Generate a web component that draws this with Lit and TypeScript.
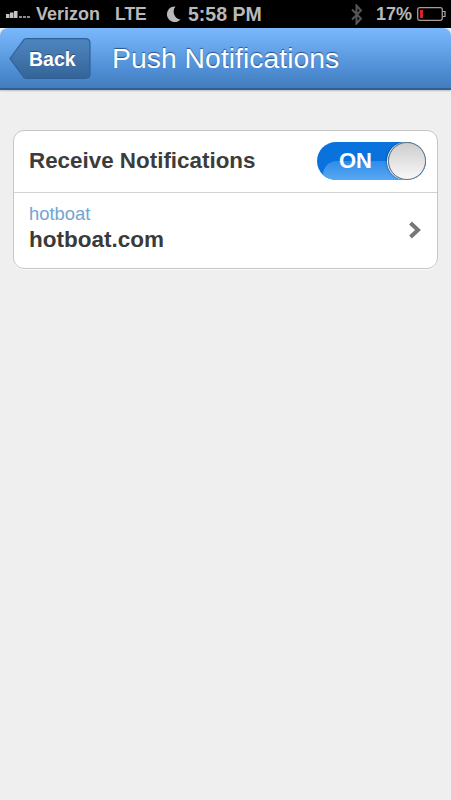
import { LitElement, html, css } from "lit";
import { customElement } from "lit/decorators.js";

@customElement("app-root")
export class AppRoot extends LitElement {
  static styles = css`
    :host { display: block; width: 451px; height: 800px; background: #efefef; font-family: "Liberation Sans", Arial, sans-serif; overflow: hidden; }
    .status { height: 28px; background: #000; display: flex; align-items: center; position: relative; color: #b9b9b9; font-weight: bold; font-size: 18px; box-sizing: border-box; }
    .signal { margin-left: 5px; display: block; flex: none; }
    .carrier { margin-left: 4px; }
    .lte { margin-left: 15px; font-size: 17.5px; }
    .center { position: absolute; left: 167px; top: 0; height: 28px; display: flex; align-items: center; gap: 7px; font-size: 19.5px; }
    .right { margin-left: auto; display: flex; align-items: center; margin-right: 5px; }
    .pct { margin-left: 13px; font-size: 18px; margin-right: 5px; }
    .nav { height: 62px; box-sizing: border-box; border-radius: 8px 8px 0 0; background: linear-gradient(#7ab7fb 0%, #69a7ec 30%, #4f8ed4 70%, #427dbd 100%); border-bottom: 2px solid #2f5f99; display: flex; align-items: center; box-shadow: 0 1px 2px rgba(0,0,0,.2); }
    .back { position: relative; margin-left: 9px; width: 82px; height: 41px; flex: none; }
    .back svg { position: absolute; inset: 0; }
    .back span { position: absolute; left: 20px; top: 10px; color: #fff; font-weight: bold; font-size: 19.5px; text-shadow: 0 -1px 0 rgba(0,0,0,.35); }
    .title { margin-left: 21px; color: #fff; font-size: 28.4px; text-shadow: 0 -1px 1px rgba(0,30,80,.6); white-space: nowrap; }
    .card { margin: 40px 13px 0; height: 139px; box-sizing: border-box; background: #fff; border: 1px solid #c6c6c6; border-radius: 11px; display: flex; flex-direction: column; box-shadow: 0 1px 0 #fafafa; }
    .row1 { height: 62px; box-sizing: border-box; border-bottom: 1px solid #d2d2d2; display: flex; align-items: center; padding: 0 11px 1px 15px; justify-content: space-between; }
    .row1 b { font-size: 22.4px; color: #3c3c3c; white-space: nowrap; }
    .toggle { width: 109px; height: 38px; box-sizing: border-box; border-radius: 19px; background: #0a72dc; position: relative; overflow: hidden; color: #fff; font-weight: bold; font-size: 22px; }
    .toggle::before { content: ""; position: absolute; left: 6px; right: 0; top: 19px; bottom: 0; border-radius: 14px 0 0 0; background: linear-gradient(#2f8cea, #5aa8f2); }
    .toggle span { position: absolute; left: 22px; top: 6px; }
    .knob { position: absolute; right: 0; top: 0; width: 38px; height: 38px; box-sizing: border-box; border-radius: 50%; border: 1px solid #777; background: linear-gradient(#cdcdcd, #f8f8f8); box-shadow: -1px 0 0 #fff, -2px 0 2px rgba(0,0,0,.25); }
    .row2 { flex: 1; display: flex; align-items: center; justify-content: space-between; padding: 0 15px; }
    .sub { font-size: 18.4px; color: #72a4d2; line-height: 20px; margin-top: -2px; }
    .dom { font-size: 22.5px; font-weight: bold; color: #3a3a3a; line-height: 30px; margin-top: 1px; }
    .lines { margin-top: -1px; }
    .chev { margin-top: -1px; }
  `;
  render() {
    return html`
      <div class="status">
        <svg class="signal" width="27" height="10" viewBox="0 0 27 10">
          <g fill="#c4c4c4"><rect x="1" y="5" width="3.5" height="4"/><rect x="5" y="3.5" width="3.5" height="5.5"/><rect x="9" y="2" width="3.5" height="7"/></g>
          <g fill="#8a8a8a"><rect x="14" y="7" width="3" height="2"/><rect x="18" y="7" width="3" height="2"/><rect x="22" y="7" width="3" height="2"/></g>
        </svg>
        <span class="carrier">Verizon</span>
        <span class="lte">LTE</span>
        <div class="center">
          <svg width="14" height="16" viewBox="0 0 14 16"><path d="M8.5 0.5 A7.8 7.8 0 1 0 13.5 13.5 A8 8 0 0 1 8.5 0.5 Z" fill="#b9b9b9"/></svg>
          <span>5:58 PM</span>
        </div>
        <div class="right">
          <svg width="12" height="21" viewBox="0 0 12 21"><path d="M1 5.5 L10 14.5 L5.5 19.5 V1.5 L10 6.5 L1 15.5" fill="none" stroke="#555" stroke-width="2"/></svg>
          <span class="pct">17%</span>
          <svg width="29" height="14" viewBox="0 0 29 14">
            <rect x="0.7" y="0.7" width="24.6" height="12.6" rx="2" fill="none" stroke="#a99" stroke-width="1.3"/>
            <rect x="3" y="3" width="3" height="8" fill="#d8222a"/>
            <path d="M26 4.5 h2 v5 h-2" fill="none" stroke="#aaa" stroke-width="1.2"/>
          </svg>
        </div>
      </div>
      <div class="nav">
        <div class="back">
          <svg width="82" height="41" viewBox="0 0 82 41">
            <defs><linearGradient id="b" x1="0" y1="0" x2="0" y2="1"><stop offset="0" stop-color="#4f86c0"/><stop offset="1" stop-color="#346499"/></linearGradient></defs>
            <path d="M1 20.5 L15 1.5 Q16 0.7 18 0.7 H76 Q81 0.7 81 5 V36 Q81 40.3 76 40.3 H18 Q16 40.3 15 39.5 Z" fill="url(#b)" stroke="#2f6199" stroke-width="1.2"/>
          </svg>
          <span>Back</span>
        </div>
        <div class="title">Push Notifications</div>
      </div>
      <div class="card">
        <div class="row1">
          <b>Receive Notifications</b>
          <div class="toggle"><span>ON</span><div class="knob"></div></div>
        </div>
        <div class="row2">
          <div class="lines">
            <div class="sub">hotboat</div>
            <div class="dom">hotboat.com</div>
          </div>
          <svg class="chev" width="14" height="18" viewBox="0 0 14 18"><path d="M2.5 2 L10 9 L2.5 16" fill="none" stroke="#777" stroke-width="4"/></svg>
        </div>
      </div>
    `;
  }
}
